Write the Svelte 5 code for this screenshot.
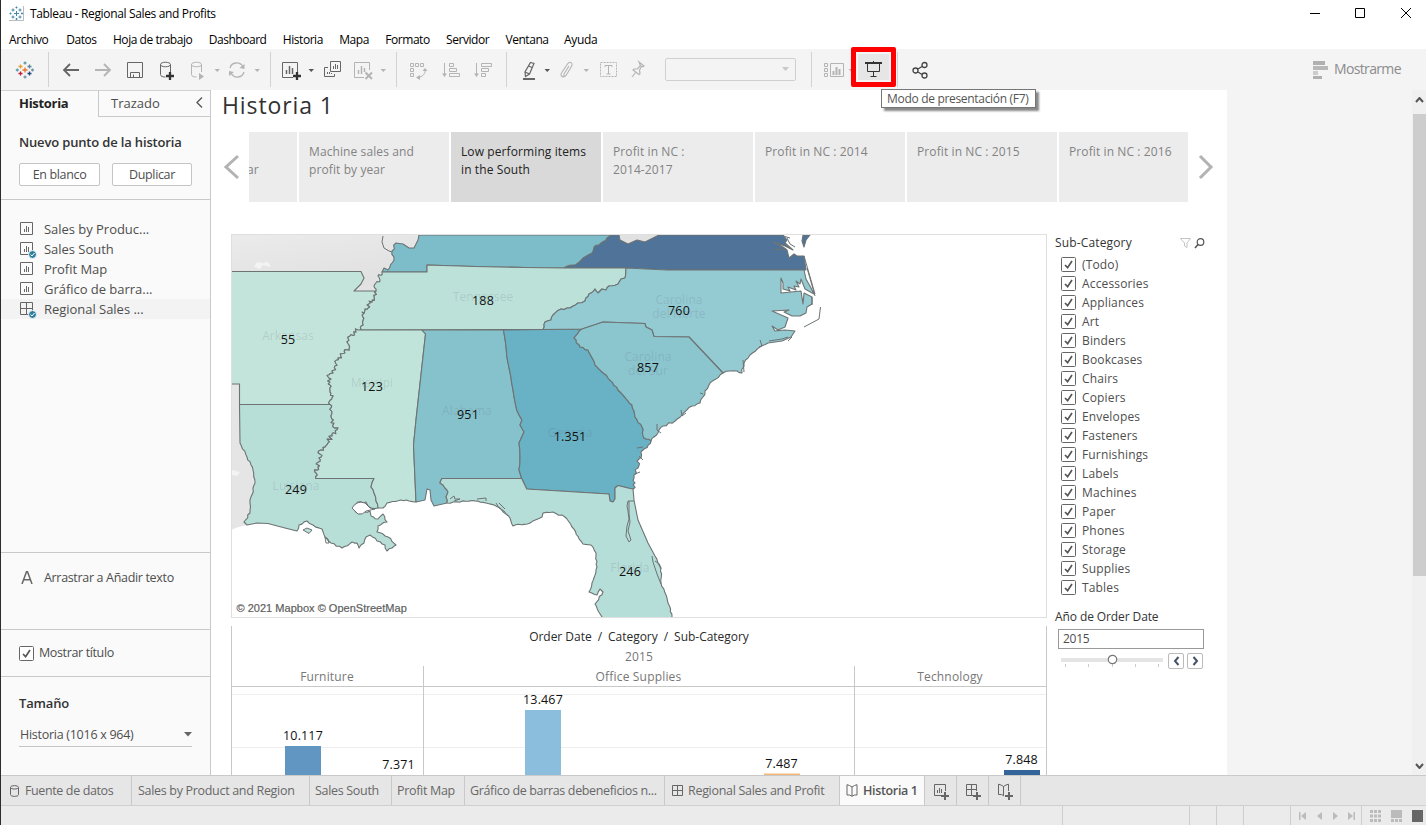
<script>
  const menus = ['Archivo', 'Datos', 'Hoja de trabajo', 'Dashboard', 'Historia', 'Mapa', 'Formato', 'Servidor', 'Ventana', 'Ayuda'];
  const sheets = [
    { name: 'Sales by Produc...', kind: 'sheet' },
    { name: 'Sales South', kind: 'sheet', used: true },
    { name: 'Profit Map', kind: 'sheet' },
    { name: 'Gráfico de barra...', kind: 'sheet' },
    { name: 'Regional Sales ...', kind: 'dash', used: true, current: true }
  ];
  const points = ['Machine sales and profit by year', 'Low performing items in the South', 'Profit in NC :\n2014-2017', 'Profit in NC : 2014', 'Profit in NC : 2015', 'Profit in NC : 2016'];
  const categories = ['(Todo)', 'Accessories', 'Appliances', 'Art', 'Binders', 'Bookcases', 'Chairs', 'Copiers', 'Envelopes', 'Fasteners', 'Furnishings', 'Labels', 'Machines', 'Paper', 'Phones', 'Storage', 'Supplies', 'Tables'];

  // Borders shared between neighbouring states, as lists of x,y pairs.
  function parse(s) {
    return s.trim().split(/\s+/).map((p) => p.split(',').map(Number));
  }
  // Adds deterministic small irregularities, for rivers and shorelines.
  function rough(s, amp = 1, step = 4) {
    const pts = parse(s);
    const out = [pts[0]];
    let n = 0;
    for (let i = 1; i < pts.length; i++) {
      const [ax, ay] = pts[i - 1];
      const [bx, by] = pts[i];
      const len = Math.hypot(bx - ax, by - ay) || 1;
      const k = Math.max(1, Math.round(len / step));
      for (let j = 1; j < k; j++) {
        n++;
        const r = (Math.abs(Math.sin(n * 12.9898 + ax * 0.7) * 43758.5453) % 1) * 2 - 1;
        out.push([ax + ((bx - ax) * j) / k - ((by - ay) / len) * r * amp, ay + ((by - ay) * j) / k + ((bx - ax) / len) * r * amp]);
      }
      out.push([bx, by]);
    }
    return out;
  }
  const rev = (a) => [...a].reverse();
  const d = (...segs) => 'M' + segs.flat().map((p) => p[0].toFixed(1) + ' ' + p[1].toFixed(1)).join('L') + 'Z';

  const riverTop = rough('382,272 378,276 380,281 375,284 376,291', 2, 1.6);
  const riverMid = rough('376,291 374,297 369,301 368,308 362,312 363,320 361,326 358,330', 2.8, 1.5);
  const riverLow = rough('358,330 350,336 349,345 345,353 338,358 335,366 332,371 329,378 330,385 330,392 332,398 330,404.5', 2.8, 1.5);
  const riverSouth = rough('330,404.5 332,412 332,419 337,430 332,434 328,443 321,450 319,458 318,467 315,472 316,478.5', 2.4, 1.6);
  const pearl = rough('374,478.5 371,487 374,493 376,501 378,508', 0.6);
  const chatta = rough('503.5,330 508,363 516.7,410 522,420 520,425 524,432 519,443 520,457 519,470 521.7,478.5', 0.4, 7);
  const perdido = rough('442,478.5 440,483 445,488 448,492 446,497 447,503', 0.8, 3);
  const smoky = rough('626,268 625,278 621,279 618,284 609,286 606,290 602,289 598,293 595,289 589,294 585,301 578,303 570,308 561,309 553,315 551,320 545,322 543,329.5', 1, 3);
  const savannah = rough('582,329 574,338 580,347 588,350 595,365 608,378 618,390 632,405 635,417 642,427 644,438 651,441', 0.9, 3);
  const ncsc = parse('582,329 603,322 645,323.5 646,327 652,330 654,336.5 689,337 723,373');
  const gafl = parse('521.7,478.5 526.7,489 609,494 610,501 613,502 615,499 615,488 618,485.5 628,488 633,489');
  const cumberland = rough('564,268 578,263 583,258 592,253 594,247 601,243 612,235', 0.8, 3);

  const states = [
    { fill: '#4f7399', d: d(cumberland, parse('619,235 620,240 628,244 637,240 645,242 653,238 659,235 783,235 787,240 785,243 793,250 785,246 773,242 783,247 787,250 789,258 794,254 797,256 804,256 806,270 667,270 626,268')) },
    { fill: '#4f7399', d: 'M803 235 802 241 804 247 806 240 810 235Z' },
    { fill: '#7dbdca', d: d(parse('419,235 418,240 414,248 409,248 403,244 396,243'), rough('396,243 392,251 394,260 388,270 384,268 382,272', 1.2, 3), parse('427,272 427,265 475,266.5 525,267.5 564,268'), cumberland) },
    { fill: '#bce1d9', d: d(riverTop, riverMid, parse('543,329.5'), rev(smoky), parse('564,268 525,267.5 475,266.5 427,265 427,272')) },
    { fill: '#c3e4da', d: d(parse('231,271.5 361,271.5 364,278 361,284 354,291 376,291'), riverMid, riverLow, parse('239.5,404.5 239.5,384 231,384')) },
    { fill: '#b7dfd8', d: d(parse('239.5,404.5'), riverSouth, pearl, rough('378,508 371,508 366,502 358,502 353,508 359,514 370,511 371,516 378,519 383,514 387,522 378,526 377,532 388,537 396,545 392,548 387,551 385,545 377,541 370,535 366,537 364,543 359,548 357,543 352,542 342,548 331,543 325,537 322,529 313,525 307,521 299,525 297,531', 0.9, 3), parse('285,528 268,523.5 257,523 247,525'), rough('244,522 250,513 250,500 255,483 253,470 247,457 240,443', 0.9, 3)) },
    { fill: '#c0e4da', d: d(riverLow, riverSouth, pearl, rough('383,508 387,503 401,500 409,501 416,502', 0.7, 3), parse('413.5,445 416,420 425.5,334 422,330')) },
    { fill: '#86c2cc', d: d(parse('422,330'), chatta, perdido, parse('434,506 431,500 430,490 427,489 425,500 416,502 413.5,445 416,420 425.5,334')) },
    { fill: '#69b1c4', d: d(rev(chatta), savannah, rough('651,441 643,450 639,459 638,468 634,475 635,483 633,489', 1.8, 2.4), rev(gafl)) },
    { fill: '#94cad2', d: d(parse('582,329 543,329.5'), rev(smoky), parse('667,270 804,270 806,279 811,288 814,294 805,289 801,279 800,284 796,281 799,287 794,286 796,290 788,287 790,291 783,289 783,283 781,278 781,293 801,291 803,304 804,293 812,297 812,304 807,307 806,313 800,316 792,316 784,312 789,310 772,311 788,318 785,327 778,330 772,326 775,331 785,330 795,331 791,337 782,341 768,343'), rough('768,343 760,347 750,355 744,363 742,373 737,371 730,371 723,373', 1, 3), rev(ncsc)) },
    { fill: '#8bc5ce', d: d(ncsc, rough('723,373 710,383 703,397 700,403 692,406 682,415 675,421 663,426 659,430 651,441', 1, 3), rev(savannah)) },
    { fill: '#b6ded8', d: d(parse('442,478.5'), gafl, parse('634,500 638,520 648,543 655,556'), rough('655,556 661,568 661,583 667,598 672,617', 0.7, 3), parse('672,620 602,620'), rough('602,617 595,604 603,592 600,589 597,595 589,592 592,583 597,567 596,553 591,545 583,544 572,527 565,517 553,512 543,513 542,517 530,523 513,526 510,518 500,508 486,503 472,500.5 447,503', 0.8, 3), rev(perdido)) }
  ];
  const lines = [
    'M804 256 815 294', 'M807 268 815 296', 'M820.5 307 819 319 804 327', 'M788 341 792 337', 'M773 250 786 249', 'M628 501h6M628 501l-1 5 1 5 1 8-2 7-1 10 3 6 2-2-3-9 2-9-1-8 0-13', 'M652 556l1 6 4 12 4 10M655 561l3 2 3 6',
    'M450 499l4-3 1 3 5 0-6 2M477 499l9-1 0 3M496 503l3 5 5 3 4 5M499 503l6 6', 'M657 424l0 6 4 3M703 394l-3-1M681 410l1 6 4-3M743 360l1 12M760 340l2 6-3 1', 'M637 448l6-1M639 456l4 4M635 474l5-2', 'M325 537l3 2 1 4-3 0z',
    'M383 236l-1 6 2 6 5 3 3 1', 'M787 238l3 6 5 3M783 236l7 2M812 297v8M769 341l13-2 6-2'
  ];
  const places = [
    ['Arkansas', 288, 340], ['Tennessee', 483, 301], ['Misisipi', 372, 387], ['Alabama', 467, 415], ['Luisiana', 296, 490],
    ['Georgia', 570, 437], ['Florida', 630, 572], ['Carolina', 679, 304], ['del Norte', 679, 318], ['Carolina', 648, 361], ['del Sur', 648, 375]
  ];
  const totals = [['188', 483, 305], ['760', 679, 315], ['55', 288, 344], ['857', 648, 372], ['123', 372, 391], ['951', 468, 419], ['1.351', 570, 441], ['249', 296, 494], ['246', 630, 576]];
</script>

{#snippet check()}
  <svg class="check" viewBox="0 0 15 15"><rect x=".5" y=".5" width="14" height="14" rx="1" fill="#fff" stroke="#666" /><path d="M4 8l2.6 2.7L11 4" fill="none" stroke="#555" stroke-width="1.7" /></svg>
{/snippet}
{#snippet caret()}
  <svg class="ic" viewBox="0 0 8 20"><path d="M1.500 9h5.500L4.250 12z" fill="currentColor" /></svg>
{/snippet}
{#snippet grid()}
  <path d="M.5.5h12v12H.5zM6.5.5v12M.5 6.5h12" />
{/snippet}
{#snippet book()}
  <path d="M1 .7v10.300h2.500L6 12.300l2.500-1.300H11V.7L8.500 1.500 6 3 3.500 1.500zM6 3v9" />
{/snippet}

<div class="window">
  <header class="title">
    <svg width="15" height="15" viewBox="0 0 15 15" fill="none" stroke="#4a8fb5" stroke-width="1"><path d="M14.500 0v14.500H0" stroke="#bbb" /><path d="M7.500 5v5M5 7.500h5M4 2.500v3M2.500 4h3M11 2.500v3M9.500 4h3M4 9.500v3M2.500 11h3M11 9.500v3M9.500 11h3M7.500.5v2M6.500 1.500h2M7.500 12v2M6.500 13h2M.5 7.500h2M1.500 6.500v2M12 7.500h2M13 6.500v2" stroke="#3f88b0" /></svg>
    <span>Tableau - Regional Sales and Profits</span>
    <svg class="winbtns" width="102" height="12" viewBox="0 0 102 12" fill="none" stroke="#000"><path d="M0 5.500h10M45.500.5h9v9h-9zM91 0l10 10M101 0L91 10" /></svg>
  </header>
  <nav class="menu">{#each menus as m}<span>{m}</span>{/each}</nav>

  <div class="toolbar">
    <svg class="ic" viewBox="0 0 20 20" fill="none" stroke-width="1.300"><path d="M7.500 10h5M10 7.500v5" stroke="#e8762c" /><path d="M3.500 6.500h4M5.500 4.500v4" stroke="#e8a02c" /><path d="M12.500 6.500h4M14.500 4.500v4" stroke="#5b879b" /><path d="M3.500 13.500h4M5.500 11.500v4" stroke="#c72035" /><path d="M12.500 13.500h4M14.500 11.500v4" stroke="#1f447e" /><path d="M8.500 3h3M10 1.500v3M.8 10h3M2.300 8.500v3" stroke="#5b9bab" /><path d="M8.500 17h3M10 15.500v3M16 10h3M17.500 8.500v3" stroke="#7099a6" /></svg>
    <i class="sep"></i>
    <svg class="ic dark" viewBox="0 0 20 20"><path d="M18 10H3M9 4l-6 6 6 6" stroke-width="1.800" /></svg>
    <svg class="ic pale" viewBox="0 0 20 20"><path d="M2 10h15M11 4l6 6-6 6" stroke-width="1.800" /></svg>
    <svg class="ic dark" viewBox="0 0 20 20"><path d="M2.500 2.500h15v15h-15zM5.500 17.500v-5h9v5M8.500 14.500v3" /></svg>
    <svg class="ic dark" viewBox="0 0 20 20"><path d="M13.500 12V4.500c0-3-10-3-10 0v10c0 2 2.500 2.500 5 2.500M3.500 4.500c0 3 10 3 10 0" /><path d="M13 12v8M9 16h8" stroke="#333" stroke-width="2.300" /></svg>
    <svg class="ic pale" viewBox="0 0 20 20"><path d="M13.500 12V4.500c0-3-10-3-10 0v10c0 2 2.500 2.500 5 2.500M3.500 4.500c0 3 10 3 10 0" /><path d="M11 13l5 3.500-5 3.500z" fill="#b4b4b4" stroke="none" /></svg>
    <span class="pale cell">{@render caret()}</span>
    <svg class="ic pale" viewBox="0 0 20 20"><path d="M3 8c1.500-6 10-7 13-1M17 12c-1.500 6-10 7-13 1" stroke-width="1.300" /><path d="M17.500 4v5l-5-1zM2 16v-5l5 1z" fill="#b4b4b4" stroke="none" /></svg>
    <span class="pale cell">{@render caret()}</span>
    <i class="sep"></i>
    <svg class="ic dark" viewBox="0 0 20 20"><path d="M12 17.500H1.500v-15h15V12" /><path d="M5.500 10v4M8.500 6v8M11.500 8v6" stroke-width="1.500" /><path d="M16 12v8M12 16h8" stroke="#333" stroke-width="2.300" /></svg>
    <span class="dark cell">{@render caret()}</span>
    <svg class="ic dark" viewBox="0 0 20 20"><path d="M7.500 1.500h10v10h-10zM5 7.500H1.500v9h10V14M10.500 6v3M12.500 4v5M14.500 5v4M4.500 12v2M6.500 12v2M8.500 13v1" /></svg>
    <svg class="ic pale" viewBox="0 0 20 20"><path d="M11 17.500H1.500v-15h15V10" /><path d="M5.500 10v4M8.500 6v8M11.500 8v4" stroke-width="1.500" /><path d="M12.500 12.500l6.500 6.500M19 12.500l-6.500 6.500" stroke-width="2" /></svg>
    <span class="pale cell">{@render caret()}</span>
    <i class="sep"></i>
    <svg class="ic pale" viewBox="0 0 20 20"><path d="M2.500 3.500h3v3h-3zM7.500 3.500h3v3h-3zM12.500 3.500h3v3h-3zM2.500 8.500h3v3h-3zM2.500 13.500h3v3h-3zM17 9c1 5-3 8-7 8.500" /><path d="M14.500 11l2.500-3 2.500 3zM12 15v5l-4-2.500z" fill="#b4b4b4" stroke="none" /></svg>
    <svg class="ic pale" viewBox="0 0 20 20"><path d="M3.500 3v12M8.500 3.500h4v3h-4zM8.500 8.500h7v3h-7zM8.500 13.500h10v3h-10z" /><path d="M1 13.500h5l-2.500 3.500z" fill="#b4b4b4" stroke="none" /></svg>
    <svg class="ic pale" viewBox="0 0 20 20"><path d="M3.500 3v12M8.500 3.500h10v3h-10zM8.500 8.500h7v3h-7zM8.500 13.500h4v3h-4z" /><path d="M1 13.500h5l-2.500 3.500z" fill="#b4b4b4" stroke="none" /></svg>
    <i class="sep"></i>
    <svg class="ic dark" viewBox="0 0 20 20"><path d="M11.500 2.500l3.500 1-4.500 10.500-4 2.500-.5-4.500zM6 12l4.500 2M9.500 6l3.500 1.500" stroke-width="1.200" /><path d="M4 19h12" stroke-width="2" /></svg>
    <span class="dark cell">{@render caret()}</span>
    <svg class="ic pale" viewBox="0 0 20 20"><path d="M12 6l-5 8c-1 2 1 3 2 1.500l5.500-9c2-4-2-5.500-4-2.500l-6 9c-2 3 2 5.500 4 2.500" stroke-width="1.100" /></svg>
    <span class="pale cell">{@render caret()}</span>
    <svg class="ic pale" viewBox="0 0 20 20"><path d="M2.500 2.500h16v14h-16z" stroke-dasharray="2 1" /><path d="M7 7V5.500h7V7M10.500 5.500v8.500M8.500 14h4" /></svg>
    <svg class="ic pale" viewBox="0 0 20 20"><path d="M10 2l5 4-1 .8-1.500-.5-2 4 .5 3.500-1 .8L4 10l1-1 3.500 0 3-3.500-.5-1zM7 12l-4 5" stroke-width="1.200" /></svg>
    <div class="combo"><svg width="8" height="5"><path d="M0 0h7L3.500 4z" fill="#c8c8c8" /></svg></div>
    <i class="sep"></i>
    <svg class="ic pale" viewBox="0 0 20 20"><path d="M1.500 3.500h3v3h-3zM1.500 8.500h3v3h-3zM1.500 13.500h3v3h-3zM7.500 3.500h13v13h-13z" /><path d="M10.500 11v4M13.500 7v8M16.500 9v6" stroke-width="2" /></svg>
    <span class="pale cell tiny">{@render caret()}</span>
    <div class="present"><svg class="ic" viewBox="0 0 20 20" fill="none" stroke="#333"><path d="M1 4h17" stroke-width="2" /><path d="M3.500 4v8.500h12V4M9.500 13v5M6.500 17.500h6M9.500 2v2" /></svg></div>
    <i class="sep"></i>
    <svg class="ic dark" viewBox="0 0 20 20"><g stroke="#444" stroke-width="1.300"><circle cx="4.500" cy="10.500" r="2.500" /><circle cx="13.500" cy="5" r="2.500" /><circle cx="13.500" cy="15.500" r="2.500" /><path d="M7 9l4-2.500M7 12l4 2.500" /></g></svg>
    <div class="showme"><svg width="15" height="18"><path d="M0 0h12v4H0zM0 15h9v3H0z" fill="#b0b0b0" /><path d="M0 5h15v4H0z" fill="#b8b8b8" /><path d="M0 10h5v4H0z" fill="#ccc" /></svg><span>Mostrarme</span></div>
    <div class="tooltip">Modo de presentación (F7)</div>
  </div>

  <main>
    <aside>
      <div class="tabs"><b>Historia</b><span>Trazado<svg width="7" height="11" fill="none" stroke="#555" stroke-width="1.300"><path d="M6 .5l-5 5 5 5" /></svg></span></div>
      <section class="new"><h3>Nuevo punto de la historia</h3><div><button>En blanco</button><button>Duplicar</button></div></section>
      <ul>
        {#each sheets as s}
          <li class:current={s.current}>
            <svg width="17" height="17" viewBox="0 0 17 17" fill="none" stroke="#666">
              {#if s.kind === 'dash'}{@render grid()}{:else}<path d="M.5.5h12v12H.5z" /><path d="M4.500 7v3M6.500 4v6M8.500 5v5" />{/if}
              {#if s.used}<circle cx="12.500" cy="12.500" r="4" fill="#2f7f9f" stroke="#fafafa" /><path d="M10.500 12.500l1.500 1.500 2.500-3" stroke="#fff" />{/if}
            </svg>{s.name}
          </li>
        {/each}
      </ul>
      <section class="drag"><svg width="12" height="13" fill="none" stroke="#666" stroke-width="1.500"><path d="M1 13L5.500.8h1L11 13M2.500 8.800h7" /></svg>Arrastrar a Añadir texto</section>
      <section class="show">{@render check()}<span>Mostrar título</span></section>
      <section class="size"><h3>Tamaño</h3><div>Historia (1016 x 964)<svg width="8" height="5"><path d="M0 0h8L4 4.500z" fill="#666" /></svg></div></section>
    </aside>

    <article>
      <h1>Historia 1</h1>
      <div class="story">
        <svg class="prev" width="17" height="26" fill="none" stroke="#b3b3b3" stroke-width="3"><path d="M15 2L3 13l12 11" /></svg>
        <div class="cards">
          <div class="card cut">ar</div>
          {#each points as p, i}<div class="card" class:on={i === 1}>{p}</div>{/each}
        </div>
        <svg class="next" width="16" height="26" fill="none" stroke="#b3b3b3" stroke-width="3"><path d="M2 2l11 11L2 24" /></svg>
      </div>
      <div class="board">
        <div class="viz">
          <svg class="map" viewBox="232 235 814 382">
            <defs><linearGradient id="land" x2="1" y2="1"><stop offset="0" stop-color="#ebebeb" /><stop offset=".5" stop-color="#e1e1e1" /><stop offset="1" stop-color="#ededed" /></linearGradient></defs>
            <path d="M231 234H430V290L360 300 231 290zM600 234h65v15h-65z" fill="url(#land)" />
            <path d="M231 380h10v60l14 30-5 55q-8 0-19 5z" fill="#e5e5e5" />
            <path d="M254 267l3-5 6 1 5-1 3 5-8-2-3 4zM232 470l8 2-3 4-5-1z" fill="#f3f3f3" />
            {#each states as s}<path d={s.d} fill={s.fill} stroke="#6d7373" stroke-width="1.100" stroke-linejoin="round" />{/each}
            {#each lines as l}<path d={l} fill="none" stroke="#6d7373" />{/each}
            <path d="M352 508q5-8 13-5l5 5 5 1-9 2q-3 4-8 3z" fill="#fff" stroke="#6d7373" />
            <path d="M303 530l4-2 5 2-3 3.500z" fill="#b7dfd8" stroke="#6d7373" />
            {#each places as [t, x, y]}<text class="place" {x} {y}>{t}</text>{/each}
            {#each totals as [t, x, y]}<text class="num" {x} {y}>{t}</text>{/each}
            <text class="credit" x="236.500" y="612">© 2021 Mapbox © OpenStreetMap</text>
          </svg>
          <svg class="chart" viewBox="231 626 816 149">
            <path d="M232 694.500h814M232 747.500h814" stroke="#eee" />
            <path d="M231.500 626v149M1046.500 626v149M423.500 666v109M854.500 666v109M231 686.500h816" stroke="#c8c8c8" />
            <path d="M285 746h36v30h-36z" fill="#6195c2" /><path d="M525 710h36v66h-36z" fill="#8bbedd" /><path d="M764 773.500h36v3h-36z" fill="#f5b878" /><path d="M1004 770h36v6h-36z" fill="#33659a" />
            <text class="head" x="639" y="641">Order Date&ensp;/&ensp;Category&ensp;/&ensp;Sub-Category</text>
            <text class="sub" x="639" y="661">2015</text><text class="sub" x="327" y="681">Furniture</text><text class="sub" x="638.500" y="681">Office Supplies</text><text class="sub" x="950" y="681">Technology</text>
            <text class="num" x="303" y="740">10.117</text><text class="num" x="398.500" y="769">7.371</text><text class="num" x="543" y="704">13.467</text><text class="num" x="781.500" y="768">7.487</text><text class="num" x="1021.500" y="764">7.848</text>
          </svg>
        </div>
        <div class="filters">
          <div class="fhead"><span>Sub-Category</span><svg width="26" height="12" fill="none"><path d="M1.500 1.500h10L8 6v4.500L5.500 9V6z" stroke="#c5c5c5" /><circle cx="21.500" cy="5" r="3.300" stroke="#555" stroke-width="1.200" /><path d="M19 7.500L16 11" stroke="#555" stroke-width="1.500" /></svg></div>
          {#each categories as c}<label>{@render check()}{c}</label>{/each}
          <h4>Año de Order Date</h4>
          <div class="field">2015</div>
          <div class="slider">
            <svg width="103" height="14" viewBox="0 0 103 14"><path d="M0 4h102v4H0z" fill="#e4e4e4" /><path d="M4.500 10v3M27.500 10v3M51.500 10v3M74.500 10v3M97.500 10v3" stroke="#ccc" /><circle cx="51.500" cy="5.500" r="4.200" fill="#fff" stroke="#777" stroke-width="1.200" /></svg>
            <i><svg width="7" height="10"><path d="M5.500 1L2 5l3.500 4" /></svg></i><i><svg width="7" height="10"><path d="M1.500 1L5 5 1.500 9" /></svg></i>
          </div>
        </div>
      </div>
    </article>
    <div class="gap"></div>
    <div class="scroll">
      <svg width="9" height="6"><path d="M1 5l3.500-4L8 5" /></svg><i></i><svg width="9" height="6"><path d="M1 1l3.500 4L8 1" /></svg>
    </div>
  </main>

  <footer class="sheets">
    <div><svg width="9" height="12" fill="none" stroke="#666"><path d="M.5 2.500c0-2.500 8-2.500 8 0v7c0 2.500-8 2.500-8 0zM.5 2.500c0 2 8 2 8 0" /></svg>Fuente de datos</div>
    <div>Sales by Product and Region</div><div class="long">Sales South</div><div class="long">Profit Map</div><div class="long">Gráfico de barras debeneficios n...</div>
    <div class="dash"><svg width="13" height="13" viewBox="0 0 13 13" fill="none" stroke="#666"><path d="M1.500 1.500h10v10h-10zM6.500 1.500v10M1.500 6.500h10" /></svg>Regional Sales and Profit</div>
    <div class="open"><svg width="12" height="13" fill="none" stroke="#666">{@render book()}</svg>Historia 1</div>
    <div class="add"><svg width="16" height="17" fill="none" stroke="#666"><path d="M8 12.500H1.500v-11h11V8M4.500 7v3M6.500 5v5M8.500 6v4" /><path d="M12 9v8M8 13h8" stroke-width="2" /></svg></div>
    <div class="add"><svg width="16" height="17" fill="none" stroke="#666"><path d="M8 12.500H1.500v-11h10V8M6.500 1.500v11M1.500 6.500h10" /><path d="M12 9v8M8 13h8" stroke-width="2" /></svg></div>
    <div class="add"><svg width="16" height="17" fill="none" stroke="#666"><path d="M7 13l-2.500-1.500h-3V1.200L4 2l2.500 1.500L9 2l2.500-.8V8M6.500 3.500v9" /><path d="M12 9v8M8 13h8" stroke-width="2" /></svg></div>
  </footer>
  <footer class="status">
    <i></i><i></i><i></i><i></i><i></i>
    <i class="nav"><svg width="56" height="8" fill="#bbb"><path d="M0 0h1.500v8H0zM7 0v8L2 4zM23 0v8l-5-4zM34 0v8l5-4zM49 0v8l5-4zM54.500 0H56v8h-1.500z" /></svg></i>
    <i class="view"><svg width="54" height="12" fill="#bbb"><path d="M0 0h3v3H0zM4 0h3v3H4zM8 0h3v3H8zM0 4.500h3v3H0zM4 4.500h3v3H4zM8 4.500h3v3H8zM0 9h3v3H0zM4 9h3v3H4zM8 9h3v3H8zM21 0h11v8H21zM21 9h3v3h-3zM25 9h3v3h-3zM29 9h3v3h-3z" /><path d="M42 0h11v12H42z" fill="#666" /></svg></i>
  </footer>
</div>

<style>
  :global(body) { overflow: hidden; background: #fff; }
  * { box-sizing: border-box; }
  svg { display: block; flex: none; }
  h1, h3, h4, ul { margin: 0; padding: 0; font-weight: 400; }
  .window { position: relative; width: 1426px; height: 825px; display: grid; grid-template-rows: 27px 22px 41px 685px 31px 19px; font: 13px 'Open Sans', 'Noto Sans', sans-serif; color: #4e4e4e; overflow: hidden; }
  .window::before { content: ''; position: absolute; z-index: 3; left: 0; top: 0; bottom: 0; width: 1px; background: #2c2c2c; }
  .title { display: flex; align-items: center; padding: 0 14px 0 9px; gap: 6px; font-size: 12px; letter-spacing: -.35px; color: #000; }
  .winbtns { margin-left: auto; }
  .menu { display: flex; align-items: center; padding: 3px 0 0 9px; gap: 16.400px; font-size: 12px; letter-spacing: -.46px; color: #000; }
  .menu span:first-child { margin-right: 1.500px; letter-spacing: -.35px; }
  .menu span:last-child { margin-left: -1px; letter-spacing: -.3px; }
  .toolbar { position: relative; background: #f4f4f4; padding-left: 15px; display: grid; align-items: center; grid-template-columns: 33px 13px 32px 32px 32px 31px 25px 14px 26px 17px 11px 26px 16px 30px 26px 17px 12px 33px 32px 33px 13px 24px 14px 25px 16px 31px 36px 146px 12px 24px 4px 46px 14px 402px 1fr; }
  .toolbar svg.ic { height: 20px; width: 20px; overflow: visible; }
  .toolbar .cell svg.ic { width: 8px; }
  .tiny { width: 4px; overflow: hidden; }
  .dark { fill: none; stroke: #666; color: #555; }
  .pale { fill: none; stroke: #b4b4b4; color: #b4b4b4; }
  .cell { stroke: none; }
  .sep { width: 1px; height: 35px; background: #d2d2d2; }
  .combo { width: 131px; height: 23px; border: 1px solid #d0d0d0; border-radius: 2px; display: flex; align-items: center; justify-content: flex-end; padding-right: 5px; }
  .present { position: relative; z-index: 2; top: -2.500px; width: 45px; height: 40px; border: 5px solid #f00; border-radius: 2px; background: #e6e6e6; box-shadow: inset 0 0 0 2px #f4f4f4; display: grid; place-items: center; }
  .present svg { margin-top: 4px; }
  .showme { display: flex; align-items: center; gap: 6px; font-size: 14px; color: #8c8c8c; }
  .showme span { position: relative; top: -1px; letter-spacing: -.65px; }
  .tooltip { position: absolute; z-index: 4; left: 881px; top: 40px; width: 155px; height: 19px; border: 1px solid #767676; background: #fff; box-shadow: 3px 3px 2px #888; font-size: 12px; line-height: 17px; padding-left: 5px; letter-spacing: -.31px; color: #555; white-space: nowrap; }
  main { display: grid; grid-template-columns: 211px 1016px 185px 14px; background: #f4f4f4; min-height: 0; }
  aside { background: #fafafa; border-right: 1px solid #c9c9c9; display: grid; grid-template: 27px 83px 353px 77px 47px 98px / minmax(0, 1fr); letter-spacing: -.2px; min-width: 0; }
  .tabs { display: grid; grid-template-columns: 98px 1fr; border-top: 1px solid #d2d2d2; line-height: 25px; }
  .tabs b { padding-left: 19px; color: #222; font-weight: 700; letter-spacing: -.3px; }
  .tabs span { display: flex; justify-content: space-between; align-items: center; border-left: 1px solid #c9c9c9; border-bottom: 1px solid #c9c9c9; padding: 0 7px 0 12px; letter-spacing: 0; }
  .tabs svg { margin-top: -2px; }
  h3 { font-size: 13px; font-weight: 600; color: #333; letter-spacing: -.16px; }
  .new { padding: 16px 18px 0 19px; border-bottom: 1px solid #c9c9c9; }
  .new h3 { line-height: 18px; white-space: nowrap; }
  .new div { display: flex; gap: 12px; margin-top: 12px; }
  button { width: 81px; height: 23px; border: 1px solid #c5c5c5; border-radius: 2px; background: #fff; font: 12.500px 'Open Sans', sans-serif; letter-spacing: -.35px; color: #4e4e4e; padding: 0 0 1px; }
  button + button { width: 80px; }
  ul { list-style: none; padding-top: 19px; border-bottom: 1px solid #c9c9c9; letter-spacing: -.03px; }
  li { height: 20px; display: flex; align-items: center; padding-left: 20px; gap: 7px; }
  li svg { position: relative; top: 1px; }
  .current { background: #f3f3f3; }
  .drag { display: flex; padding: 16px 0 0 21px; gap: 11px; line-height: 17px; font-size: 12.500px; letter-spacing: -.33px; border-bottom: 1px solid #c9c9c9; }
  .drag svg { margin-top: 2px; }
  .show { display: flex; align-items: center; gap: 5px; padding-left: 19px; font-size: 12.500px; letter-spacing: -.37px; border-bottom: 1px solid #c9c9c9; }
  .show span { padding-bottom: 1px; }
  .check { width: 15px; height: 15px; }
  .size { padding: 16px 18px 0 19px; }
  .size h3 { line-height: 20px; }
  .size div { display: flex; justify-content: space-between; align-items: center; height: 23px; margin-top: 11px; padding: 0 0 1px 1px; font-size: 12.500px; letter-spacing: -.27px; border-bottom: 1px solid #c5c5c5; }
  article { background: #fff; min-width: 0; overflow: hidden; }
  h1 { font-size: 23px; line-height: 30px; height: 42px; padding-left: 11px; color: #333; letter-spacing: .9px; }
  .story { display: grid; grid-template-columns: 38px 939px 1fr; height: 70px; align-items: center; }
  .prev { margin-left: 12px; }
  .next { margin-left: 10px; }
  .cards { display: grid; grid-template-columns: 48px repeat(5, 150px) 129px; gap: 2px; height: 70px; }
  .card { background: #ececec; padding: 11px 4px 0 10px; font-size: 12px; line-height: 18px; color: #838383; white-space: pre-line; letter-spacing: .1px; }
  .card.cut { padding: 29px 0 0; text-indent: -2px; overflow: hidden; }
  .card.on { background: #d9d9d9; color: #222; }
  .board { display: grid; grid-template-columns: 816px 150px; column-gap: 8px; padding: 32px 0 0 20px; }
  .map { width: 816px; height: 384px; border: 1px solid #dfdfdf; }
  .chart { width: 816px; height: 149px; margin-top: 8px; }
  text { text-anchor: middle; font-family: 'Open Sans', sans-serif; }
  .num { font-size: 12.500px; fill: #111; letter-spacing: .15px; }
  .place { font-size: 12px; fill: #557; fill-opacity: .17; letter-spacing: .1px; }
  .credit { text-anchor: start; font: 11px 'Liberation Sans', sans-serif; fill: #606060; stroke: #606060; stroke-width: .2px; letter-spacing: .02px; }
  .head { font-size: 12px; font-weight: 500; fill: #2a2a2a; letter-spacing: -.02px; }
  .sub { font-size: 12px; fill: #777; letter-spacing: .18px; }
  .filters { font-size: 12px; letter-spacing: .15px; }
  .fhead { height: 21px; display: flex; justify-content: space-between; line-height: 18px; color: #333; font-weight: 500; }
  .fhead svg { margin-top: 3px; }
  label { display: flex; align-items: center; height: 19px; gap: 6px; padding-left: 6px; }
  h4 { font-size: 12px; font-weight: 500; color: #333; line-height: 20px; margin-top: 10px; letter-spacing: -.1px; }
  .field { width: 146px; height: 20px; margin: 2px 0 0 3px; border: 1px solid #999; padding-left: 4px; line-height: 18px; letter-spacing: -.25px; }
  .slider { display: flex; margin: 4px 0 0 6px; height: 16px; }
  .slider > svg { margin: 1px 3px 0 0; }
  .slider i { width: 16px; height: 16px; margin-left: 1px; margin-right: 2px; border: 1px solid #bbb; border-radius: 2px; display: grid; place-items: center; }
  .slider i svg { fill: none; stroke: #445468; stroke-width: 2; }
  .scroll { background: #f0f0f0; display: flex; flex-direction: column; align-items: flex-end; padding: 7px 1px 6px 0; }
  .scroll svg { fill: none; stroke: #555; stroke-width: 2; margin-right: 1px; }
  .scroll i { width: 13px; height: 462px; background: #cdcdcd; margin: 11px -1px auto 0; }
  .sheets { display: grid; grid-template-columns: 132px 178px 82px 73px 200px 175px 85px 32px 32px 32px; background: #e6e6e6; border-top: 1px solid #c9c9c9; border-bottom: 1px solid #cfcfcf; color: #686868; font-size: 12.500px; letter-spacing: -.31px; }
  .sheets div { display: flex; align-items: center; gap: 6px; padding-left: 6px; border-right: 1px solid #c9c9c9; white-space: nowrap; overflow: hidden; }
  .sheets div:first-child { padding-left: 10px; letter-spacing: -.38px; }
  .sheets .long { padding-left: 5px; }
  .sheets .long:nth-child(5) { letter-spacing: -.35px; }
  .sheets .dash { gap: 4px; letter-spacing: -.3px; }
  .sheets .open { background: #fafafa; font-weight: 600; color: #555; gap: 5px; letter-spacing: -.34px; padding-bottom: 1px; }
  .sheets .add { padding: 2px 0 0 8px; }
  .status { display: grid; grid-template-columns: 1063px 127px 27px 27px 47px 71px 1fr; background: #ebebeb; }
  .status i { border-right: 1px solid #cdcdcd; display: flex; align-items: center; }
  .status .nav { padding-left: 8px; }
  .status .view { border: 0; padding-left: 8px; }
</style>
